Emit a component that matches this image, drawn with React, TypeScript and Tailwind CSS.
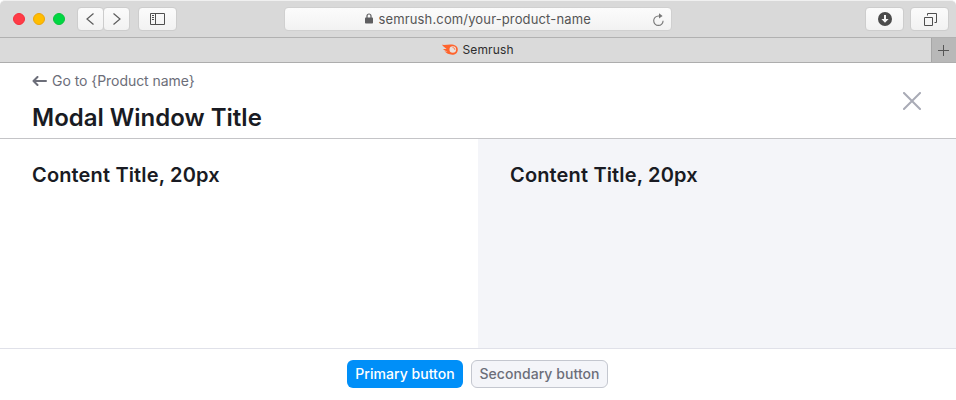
import React from "react";

const chromeButton =
  "flex h-[24px] items-center justify-center rounded-[4px] border border-[#cdcdcd] bg-linear-to-b from-[#fbfbfb] to-[#f2f2f2] box-border";

function BrowserToolbar() {
  return (
    <div className="bg-white">
      <div className="flex h-[38px] items-start rounded-t-[5px] border-t border-b border-t-[#f0f0f0] border-b-[#b1b1b1] bg-[#d9d9d9] pt-[6px] pr-[7px] pl-[13px]">
        <div className="flex h-[24px] items-center gap-2">
          <span className="size-3 rounded-full border border-[#f52f3c] bg-[#ff3b47]" />
          <span className="size-3 rounded-full border border-[#eca50b] bg-[#ffbd00]" />
          <span className="size-3 rounded-full border border-[#0bc23c] bg-[#00d742]" />
        </div>
        <div className="ml-[12px] flex h-[24px]">
          <div className={`${chromeButton} w-[27px]`}>
            <svg width="25" height="22" viewBox="0 0 25 22" fill="none" stroke="#5c5c5c" strokeWidth="1.2">
              <path d="M15.5 5.5 9 11l6.500 5.500" />
            </svg>
          </div>
          <div className={`${chromeButton} -ml-px w-[27px]`}>
            <svg width="25" height="22" viewBox="0 0 25 22" fill="none" stroke="#5c5c5c" strokeWidth="1.2">
              <path d="M9.500 5.500 16 11l-6.500 5.500" />
            </svg>
          </div>
        </div>
        <div className={`${chromeButton} ml-[8px] w-[39px]`}>
          <svg width="15" height="12" viewBox="0 0 15 12" fill="none" stroke="#4f4f4f">
            <path d="M.5.5h14v11H.5zM5.5.5v11M2 2.5h2M2 4.5h2M2 6.5h2" />
          </svg>
        </div>
        <div className="ml-[107px] flex h-[24px] w-[388px] items-center rounded-[4px] border border-[#d0d0d0] bg-linear-to-b from-[#fcfcfc] to-[#f2f2f2] pr-[7px] pl-[80px]">
          <svg className="mr-[5.500px] mb-px shrink-0" width="8" height="11" viewBox="0 0 8 11">
            <path d="M2 5V3a2 2 0 0 1 4 0v2" fill="none" stroke="#5e5e60" strokeWidth="1.2" />
            <rect y="4.6" width="8" height="6" rx="0.8" fill="#5e5e60" />
          </svg>
          <span className="text-[13px] leading-[22px] tracking-[0.14px] text-[#555]">semrush.com/your-product-name</span>
          <svg className="ml-auto shrink-0" width="11" height="13" viewBox="0 0 11 13" fill="none">
            <path d="M6.400 3H5.400a4.700 4.700 0 1 0 4.700 4.700" stroke="#777" strokeWidth="1.1" />
            <path d="M6 .2 9.600 3 6 5.600z" fill="#777" />
          </svg>
        </div>
        <div className={`${chromeButton} ml-auto w-[39px]`}>
          <svg width="14" height="14" viewBox="0 0 14 14">
            <circle cx="7" cy="7" r="7" fill="#4b4b4b" />
            <path d="M6 3h2v4h2.600L7 10.800 3.400 7H6z" fill="#f7f7f7" />
          </svg>
        </div>
        <div className={`${chromeButton} ml-[6px] w-[39px] pl-px`}>
          <svg width="13" height="13" viewBox="0 0 13 13" fill="none" stroke="#4f4f4f">
            <path d="M.5 4.500h8v8h-8zM3.500 2.500v-2h9v9h-2" />
          </svg>
        </div>
      </div>
      <div className="flex h-[25px] border-b border-[#adadad] bg-[#dadada]">
        <div className="flex flex-1 items-center pl-[442px]">
          <svg className="mr-[4.500px] mb-px" width="16" height="11" viewBox="0 0 16 11">
            <path
              d="M0 .8C3 1.200 5.500.4 8.500.4c4.200 0 7.300 1.700 7.300 5s-2.500 5.300-5.600 5.300c-3.200 0-6-1.600-7.700-3.400 1.300.3 2.400.3 3-.1-1.800-.5-3.500-1.200-4.500-2.300 1.200.3 2.600.2 3.600-.2C3 4 1.200 2.500 0 .8Z"
              fill="#ff642d"
            />
            <circle cx="10.800" cy="5.500" r="3.300" fill="#e9e0dc" />
            <path d="M11 3.600c1.100.1 1.700.8 1.800 1.800" fill="none" stroke="#ff642d" strokeWidth=".9" strokeLinecap="round" />
          </svg>
          <span className="text-[12px] tracking-[0.13px] text-[#2d2d2d]">Semrush</span>
        </div>
        <div className="flex w-[25px] items-center justify-center border-l border-[#a6a6a6] bg-[#b8b8b8] pr-[2px]">
          <svg width="11" height="11" viewBox="0 0 11 11" stroke="#555">
            <path d="M5.500 0v11M0 5.500h11" />
          </svg>
        </div>
      </div>
    </div>
  );
}

export default function App() {
  return (
    <div className="flex h-[400px] w-[956px] flex-col overflow-hidden bg-white font-['Inter',sans-serif] text-[#191b23]">
      <BrowserToolbar />
      <header className="flex h-[76px] items-center justify-between border-b border-[#c4c4c7] pr-[35px] pl-8">
        <div className="pt-px">
          <a className="flex h-5 items-center text-[14px] leading-5 tracking-[-0.05px] text-[#6c6e79]">
            <svg className="mr-[5px]" width="15" height="10" viewBox="0 0 15 10" fill="none" stroke="#6c6e79" strokeWidth="2" strokeLinecap="round" strokeLinejoin="round">
              <path d="M14 5H1.500M5.500 1l-4 4 4 4" />
            </svg>
            Go to {"{Product name}"}
          </a>
          <h1 className="mt-[13px] text-[24px] leading-7 font-semibold">Modal Window Title</h1>
        </div>
        <svg width="18" height="18" viewBox="0 0 18 18" stroke="#a9abb6" strokeWidth="2" strokeLinecap="square">
          <path d="m1 1 16 16M17 1 1 17" />
        </svg>
      </header>
      <main className="grid h-[209px] grid-cols-2">
        <section className="px-8 pt-6">
          <h2 className="text-[20px] leading-6 font-semibold tracking-[0.15px]">Content Title, 20px</h2>
        </section>
        <section className="bg-[#f4f5f9] px-8 pt-6">
          <h2 className="text-[20px] leading-6 font-semibold tracking-[0.15px]">Content Title, 20px</h2>
        </section>
      </main>
      <footer className="flex h-[52px] items-center justify-center gap-2 border-t border-[#e0e1e9] pr-px pb-[2px]">
        <button className="h-7 w-[116px] rounded-[6px] bg-[#008ff8] text-[14px] font-medium tracking-[0.04px] text-white">Primary button</button>
        <button className="h-7 w-[137px] rounded-[6px] border border-[#c4c7cf] bg-[#f4f5f9] text-[14px] font-medium tracking-[0.06px] text-[#6c6e79]">Secondary button</button>
      </footer>
    </div>
  );
}
